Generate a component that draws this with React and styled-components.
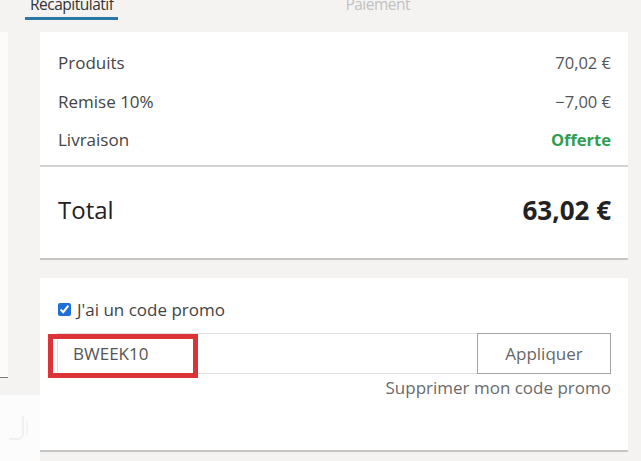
import React from "react";
import styled, { createGlobalStyle } from "styled-components";

const Global = createGlobalStyle`
  html, body { margin: 0; padding: 0; }
  body {
    background: #f4f3f2;
    font-family: "Open Sans", "Noto Sans", "Liberation Sans", sans-serif;
    color: #444;
    width: 641px;
    height: 461px;
    overflow: hidden;
  }
  * { box-sizing: border-box; }
`;

const Page = styled.div`
  display: flex;
  flex-direction: column;
  height: 461px;
`;

const TabBar = styled.div`
  display: flex;
  align-items: flex-end;
  height: 32px;
  padding-left: 25px;
  overflow: hidden;
`;

const Tab = styled.div`
  font-size: 15.5px;
  line-height: 20px;
  letter-spacing: -0.5px;
  padding: 0 5px 3px;
  margin-bottom: 12px;
  margin-left: ${(p) => p.$offset || 0}px;
  color: ${(p) => (p.$active ? "#333" : "#c2c2c2")};
  border-bottom: 3px solid ${(p) => (p.$active ? "#2a78a8" : "transparent")};
  white-space: nowrap;
`;

const Body = styled.div`
  display: flex;
  flex: 1;
`;

const LeftRail = styled.div`
  width: 40px;
  display: flex;
  flex-direction: column;
`;

const RailStrip = styled.div`
  width: 8px;
  height: 345px;
  background: #fbfbfb;
`;

const RailDash = styled.div`
  width: 8px;
  height: 1px;
  background: #777;
`;

const RailPanel = styled.div`
  margin-top: 17px;
  flex: 1;
  background: #fcfcfc;
  display: flex;
  align-items: center;
  justify-content: center;
`;

const Column = styled.div`
  flex: 1;
  display: flex;
  flex-direction: column;
  gap: 18px;
  padding-right: 13px;
`;

const Card = styled.section`
  background: #fff;
  border-bottom: 2px solid #c4c4c4;
`;

const Lines = styled.div`
  padding: 12px 17px 5px 18px;
  border-bottom: 2px solid #d2d2d2;
`;

const Line = styled.div`
  display: flex;
  justify-content: space-between;
  font-size: 17px;
  line-height: 38.5px;
  color: #444;
`;

const Value = styled.span`
  font-size: 16.5px;
  color: ${(p) => (p.$green ? "#2f9e4e" : "#555")};
  font-weight: ${(p) => (p.$green ? 700 : 400)};
`;

const TotalLine = styled.div`
  display: flex;
  justify-content: space-between;
  align-items: center;
  padding: 26px 17px 31px 18px;
  line-height: 34px;
`;

const TotalLabel = styled.span`
  font-size: 24px;
  color: #222;
`;

const TotalValue = styled.span`
  font-size: 26px;
  font-weight: 700;
  color: #222;
`;

const Promo = styled.div`
  padding: 22px 17px 52px 17px;
  display: flex;
  flex-direction: column;
`;

const CheckRow = styled.label`
  display: flex;
  align-items: center;
  gap: 6px;
  height: 20px;
  font-size: 17px;
  color: #444;
  padding-left: 1px;
`;

const Check = styled.input`
  margin: 0;
  width: 13px;
  height: 13px;
  accent-color: #1f6fd8;
`;

const InputRow = styled.div`
  position: relative;
  margin-top: 13px;
  display: flex;
  height: 41px;
`;

const CodeInput = styled.div`
  flex: 1;
  border: 1px solid #e2e2e2;
  border-right: none;
  padding-left: 15px;
  display: flex;
  align-items: center;
  font-size: 17px;
  color: #555;
`;

const ApplyButton = styled.button`
  width: 134px;
  border: 1px solid #a3a3a3;
  background: #fff;
  font-family: inherit;
  font-size: 17px;
  color: #666;
  padding: 0;
`;

const Highlight = styled.div`
  position: absolute;
  left: -9px;
  top: 1px;
  width: 150px;
  height: 44px;
  border: 5px solid #dc3338;
  pointer-events: none;
`;

const RemoveLink = styled.div`
  margin-top: 4px;
  text-align: right;
  font-size: 17px;
  line-height: 20px;
  color: #6a6a6a;
`;

export default function App() {
  return (
    <>
      <Global />
      <Page>
        <TabBar>
          <Tab $active>Récapitulatif</Tab>
          <Tab $offset={222}>Paiement</Tab>
        </TabBar>
        <Body>
          <LeftRail>
            <RailStrip />
            <RailDash />
            <RailPanel>
              <svg width="30" height="30" viewBox="0 0 30 30" fill="none">
                <path d="M18 3 V20 Q18 26 12 26 H4" stroke="#f0f0f0" strokeWidth="2" />
                <path d="M22 8 V22" stroke="#f2f2f2" strokeWidth="1.5" />
              </svg>
            </RailPanel>
          </LeftRail>
          <Column>
            <Card>
              <Lines>
                <Line>
                  <span>Produits</span>
                  <Value>70,02 €</Value>
                </Line>
                <Line>
                  <span>Remise 10%</span>
                  <Value>−7,00 €</Value>
                </Line>
                <Line>
                  <span>Livraison</span>
                  <Value $green>Offerte</Value>
                </Line>
              </Lines>
              <TotalLine>
                <TotalLabel>Total</TotalLabel>
                <TotalValue>63,02 €</TotalValue>
              </TotalLine>
            </Card>
            <Card>
              <Promo>
                <CheckRow>
                  <Check type="checkbox" defaultChecked />
                  J'ai un code promo
                </CheckRow>
                <InputRow>
                  <CodeInput>BWEEK10</CodeInput>
                  <ApplyButton>Appliquer</ApplyButton>
                  <Highlight />
                </InputRow>
                <RemoveLink>Supprimer mon code promo</RemoveLink>
              </Promo>
            </Card>
          </Column>
        </Body>
      </Page>
    </>
  );
}
